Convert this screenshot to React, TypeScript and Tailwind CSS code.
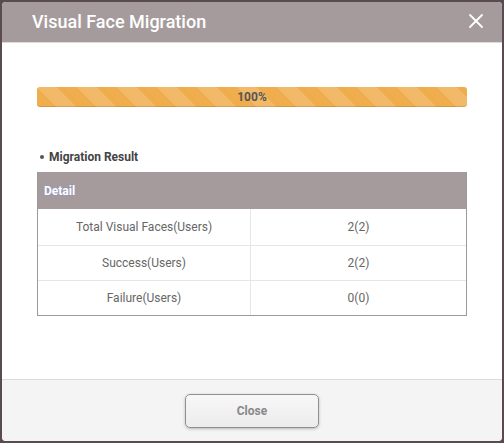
import React from 'react';
import { X } from 'lucide-react';

const rows = [
    { label: 'Total Visual Faces(Users)', value: '2(2)' },
    { label: 'Success(Users)', value: '2(2)' },
    { label: 'Failure(Users)', value: '0(0)' },
];

const App: React.FC = () => {
    return (
        <div className="w-[504px] h-[443px] bg-[#594b50] p-[2px] font-['Roboto','Liberation_Sans',sans-serif]">
            <div className="h-full bg-white rounded-[4px] overflow-hidden flex flex-col">
                {/* Header */}
                <div className="h-[41px] shrink-0 bg-[#a59b9d] border-b border-[#dcdcdc] flex items-center justify-between pl-[30px] pr-[14px]">
                    <span className="text-white text-[18px] font-medium leading-none">Visual Face Migration</span>
                    <X size={24} strokeWidth={1.8} className="text-white -mt-[2px]" />
                </div>

                {/* Body */}
                <div className="flex-1 px-[35px] pt-[44px]">
                    <div className="relative h-[20px] rounded-[3px] overflow-hidden bg-[#f0ad4e] shadow-[inset_0_-1px_0_rgba(0,0,0,0.12)] bg-[linear-gradient(45deg,rgba(255,255,255,0.15)_25%,transparent_25%,transparent_50%,rgba(255,255,255,0.15)_50%,rgba(255,255,255,0.15)_75%,transparent_75%,transparent)] bg-[length:40px_40px] flex items-center justify-center">
                        <span className="text-[12px] font-bold text-[#555]">100%</span>
                    </div>

                    <div className="mt-[41px] flex items-center gap-[5px] pl-[3px]">
                        <span className="w-[4px] h-[4px] rounded-full bg-[#555]"></span>
                        <span className="text-[12px] font-bold text-[#444]">Migration Result</span>
                    </div>

                    <div className="mt-[6px] border-x border-b border-[#9a9a9a]">
                        <div className="h-[37px] bg-[#a59b9d] flex items-center px-[6px]">
                            <span className="text-[12px] font-bold text-white [text-shadow:0_0_2px_rgba(120,150,255,0.6)]">Detail</span>
                        </div>
                        {rows.map((r, i) => (
                            <div key={r.label} className={`grid grid-cols-[213px_1fr] ${i > 0 ? 'h-[35px] border-t border-[#e6e6e6]' : 'h-[36px]'}`}>
                                <div className="flex items-center justify-center text-[12px] text-[#666] border-r border-[#e6e6e6]">{r.label}</div>
                                <div className="flex items-center justify-center text-[12px] text-[#666]">{r.value}</div>
                            </div>
                        ))}
                    </div>
                </div>

                {/* Footer */}
                <div className="h-[62px] shrink-0 bg-[#f4f4f4] border-t border-[#dcdcdc] flex justify-center pt-[14px]">
                    <button className="w-[134px] h-[34px] rounded-[5px] border border-[#8f8f8f] bg-[linear-gradient(#f7f7f7,#ececec)] shadow-[0_1px_3px_rgba(0,0,0,0.25)] text-[12px] font-bold text-[#888]">
                        Close
                    </button>
                </div>
            </div>
        </div>
    );
};

export default App;
